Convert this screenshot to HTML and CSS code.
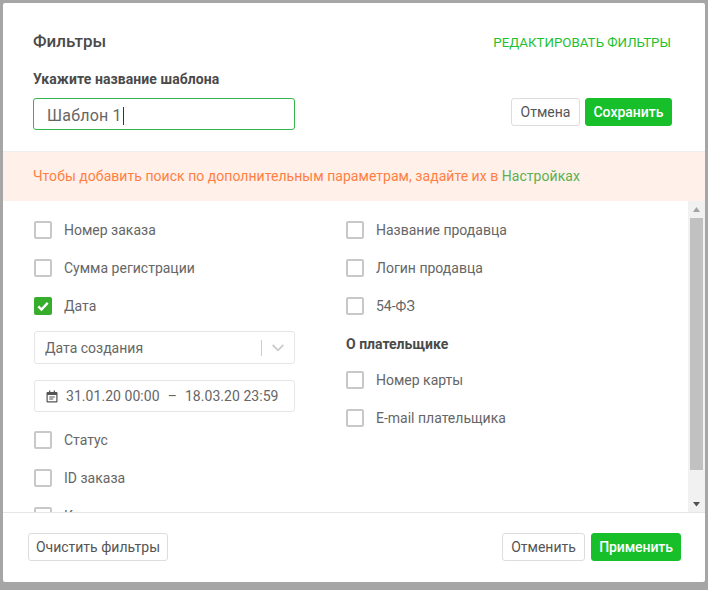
FILE: index.html
```html
<!DOCTYPE html>
<html lang="ru">
<head>
<meta charset="utf-8">
<title>Фильтры</title>
<link rel="stylesheet" href="styles.css">
</head>
<body>
<div class="modal">
  <header class="top">
    <div class="title-row">
      <h1 class="title">Фильтры</h1>
      <a class="edit-link">РЕДАКТИРОВАТЬ ФИЛЬТРЫ</a>
    </div>
    <div class="name-label">Укажите название шаблона</div>
    <div class="name-row">
      <div class="name-input">Шаблон 1<span class="caret"></span></div>
      <div class="name-actions">
        <button class="btn btn-cancel">Отмена</button>
        <button class="btn btn-primary btn-save">Сохранить</button>
      </div>
    </div>
  </header>
  <div class="notice">Чтобы добавить поиск по дополнительным параметрам, задайте их в <a class="notice-link">Настройках</a></div>
  <div class="body">
    <div class="scroll">
      <div class="col col-left">
        <div class="check"><span class="box"></span>Номер заказа</div>
        <div class="check"><span class="box"></span>Сумма регистрации</div>
        <div class="check"><span class="box box-on"><svg viewBox="0 0 18 18" width="18" height="18"><path d="M4.300 9.300l3.200 3.200 6.200-6.600" fill="none" stroke="#fff" stroke-width="2.400"/></svg></span>Дата</div>
        <div class="select">
          <span class="select-value">Дата создания</span>
          <span class="select-sep"></span>
          <svg class="select-arrow" viewBox="0 0 12 8" width="12" height="8"><path d="M.7 1l5.300 5.300L11.300 1" fill="none" stroke="#ccc" stroke-width="1.800"/></svg>
        </div>
        <div class="range">
          <svg class="cal" viewBox="0 0 12 13" width="12" height="13"><path d="M1.500 2h9a1 1 0 0 1 1 1v8.500a1 1 0 0 1-1 1h-9a1 1 0 0 1-1-1V3a1 1 0 0 1 1-1zM1.700 5v6.300h8.600V5z" fill="#555" fill-rule="evenodd"/><path d="M3 .5h1.300V3H3zM7.700 .5H9V3H7.700zM3.200 6.400h5.600v1H3.200zM3.200 8.600h4v1h-4z" fill="#555"/></svg>
          <span>31.01.20 00:00</span><span class="dash">–</span><span>18.03.20 23:59</span>
        </div>
        <div class="check"><span class="box"></span>Статус</div>
        <div class="check"><span class="box"></span>ID заказа</div>
        <div class="check"><span class="box"></span>Код</div>
      </div>
      <div class="col">
        <div class="check"><span class="box"></span>Название продавца</div>
        <div class="check"><span class="box"></span>Логин продавца</div>
        <div class="check"><span class="box"></span>54-ФЗ</div>
        <div class="group">О плательщике</div>
        <div class="check"><span class="box"></span>Номер карты</div>
        <div class="check"><span class="box"></span>E-mail плательщика</div>
      </div>
    </div>
    <div class="scrollbar">
      <svg class="sb-arrow" viewBox="0 0 17 17" width="17" height="17"><path d="M5 11h7L8.500 6z" fill="#a3a3a3"/></svg>
      <div class="sb-track"><div class="sb-thumb"></div></div>
      <svg class="sb-arrow" viewBox="0 0 17 17" width="17" height="17"><path d="M5 7h7l-3.500 4.500z" fill="#505050"/></svg>
    </div>
  </div>
  <footer class="foot">
    <button class="btn btn-clear">Очистить фильтры</button>
    <div class="foot-actions">
      <button class="btn btn-revert">Отменить</button>
      <button class="btn btn-primary btn-apply">Применить</button>
    </div>
  </footer>
</div>
</body>
</html>
```

FILE: styles.css
```css
* { box-sizing: border-box; }
html, body { height: 100%; }
body {
  margin: 0;
  padding: 3px 3px 8px;
  background: #a6a6a6;
  font-family: Roboto, "Liberation Sans", sans-serif;
  font-size: 14px;
  color: #666;
  overflow: hidden;
}
.modal {
  height: 579px;
  background: #fff;
  border-radius: 2px;
  display: flex;
  flex-direction: column;
  overflow: hidden;
}
.top { height: 148px; padding: 28px 34px 0 30px; flex: none; }
.title-row { display: flex; justify-content: space-between; align-items: center; height: 20px; }
.title { margin: 0; font-size: 17px; line-height: 20px; font-weight: 500; color: #4a4a4a; }
.edit-link { font-size: 13.300px; color: #1fc130; margin-top: 2px; }
.name-label { margin-top: 19px; font-size: 14px; letter-spacing: .08px; line-height: 18px; font-weight: 700; color: #4a4a4a; }
.name-row { margin: 10px -1px 0 0; display: flex; justify-content: space-between; align-items: flex-start; }
.name-input {
  width: 262px; height: 32px;
  border: 1px solid #35b54a;
  border-radius: 3px;
  padding: 3px 13px 0;
  font-size: 16px;
  line-height: 27px;
  color: #666;
  letter-spacing: .2px;
  display: flex;
  align-items: center;
}
.caret { width: 1px; height: 18px; background: #333; margin-left: 1px; }
.name-actions { display: flex; gap: 5px; }
.btn {
  height: 28px;
  padding: 0;
  border: 1px solid #ddd;
  border-radius: 3px;
  background: #fff;
  color: #555;
  font: 14px Roboto, "Liberation Sans", sans-serif;
}
.btn-cancel { width: 69px; }
.btn-save { width: 87px; }
.btn-clear { width: 140px; }
.btn-revert { width: 83px; }
.btn-apply { width: 90px; }
.btn-primary { background: #17bf2b; border-color: #17bf2b; color: #fff; font-weight: 500; }
.btn-apply { letter-spacing: -.1px; }
.notice {
  height: 50px;
  flex: none;
  padding-left: 30px;
  background: #fff0ea;
  border-top: 1px solid #eee;
  font-size: 14px;
  letter-spacing: .04px;
  line-height: 48px;
  color: #ff7f43;
}
.notice-link { color: #5cb04f; }
.body { height: 311px; flex: none; display: flex; }
.scroll { flex: 1; display: flex; padding: 20px 0 0 31px; overflow: hidden; }
.col { width: 312px; flex: none; }
.check { height: 18px; margin-bottom: 20px; display: flex; align-items: center; line-height: 18px; color: #666; }
.box {
  width: 18px; height: 18px;
  flex: none;
  margin-right: 12px;
  border: 2px solid #c8c8c8;
  border-radius: 2px;
  background: #fff;
}
.box-on { border: 0; background: #37ad2c; }
.box-on svg { display: block; }
.select {
  width: 261px; height: 33px;
  margin-top: -4px;
  border: 1px solid #e6e6e6;
  border-radius: 3px;
  display: flex;
  align-items: center;
  padding: 0 10px;
  color: #666;
}
.select-value { flex: 1; }
.select-sep { width: 1px; height: 16px; background: #ccc; margin-right: 10px; }
.select-arrow { flex: none; }
.range {
  width: 261px; height: 32px;
  margin: 16px 0 19px;
  border: 1px solid #e6e6e6;
  border-radius: 3px;
  display: flex;
  align-items: center;
  padding: 0 11px;
  color: #666;
  letter-spacing: .05px;
}
.cal { margin-right: 8px; flex: none; }
.dash { margin: 0 8px; }
.group { margin: 0 0 18px; font-weight: 700; line-height: 18px; color: #4a4a4a; }
.scrollbar { width: 17px; flex: none; background: #f1f1f1; display: flex; flex-direction: column; }
.sb-arrow { display: block; flex: none; }
.sb-track { flex: 1; padding: 0 2px; }
.sb-thumb { height: 252px; background: #c1c1c1; }
.foot {
  flex: 1;
  border-top: 1px solid #e6e6e6;
  display: flex;
  justify-content: space-between;
  align-items: flex-start;
  padding: 20px 24px 0 25px;
}
.foot-actions { display: flex; gap: 6px; }
```
